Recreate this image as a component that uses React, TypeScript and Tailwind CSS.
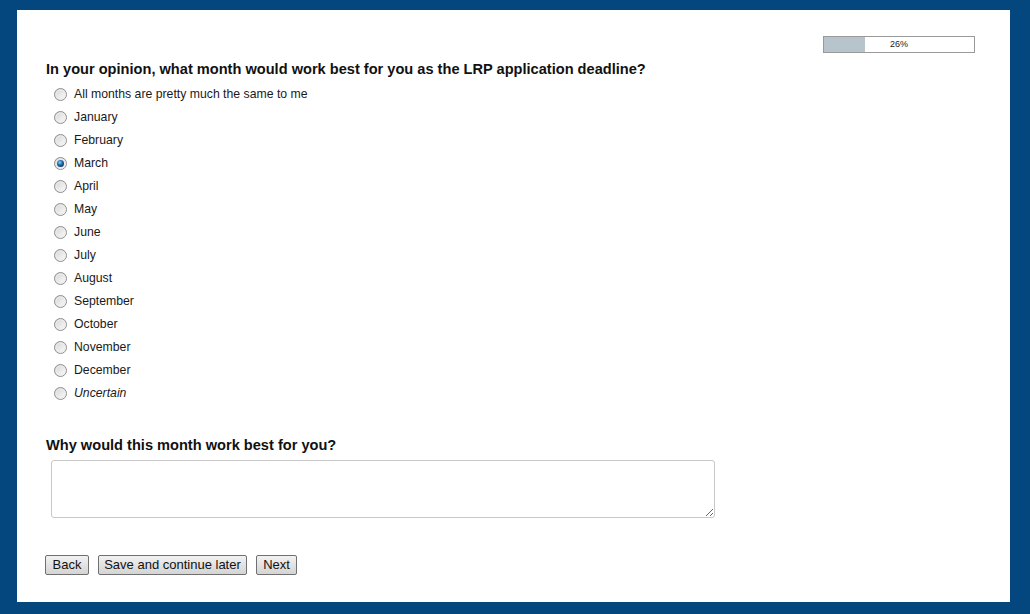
import React from "react";

const options = [
  "All months are pretty much the same to me",
  "January",
  "February",
  "March",
  "April",
  "May",
  "June",
  "July",
  "August",
  "September",
  "October",
  "November",
  "December",
  "Uncertain",
];

function Radio({ checked }: { checked: boolean }) {
  return (
    <svg width="13" height="13" viewBox="0 0 13 13" className="shrink-0">
      <defs>
        <linearGradient id="rg" x1="0" y1="0" x2="1" y2="1">
          <stop offset="0" stopColor="#d2d2d2" />
          <stop offset="1" stopColor="#ffffff" />
        </linearGradient>
        <radialGradient id="dot" cx="0.4" cy="0.35" r="0.7">
          <stop offset="0" stopColor="#8fd0f5" />
          <stop offset="0.5" stopColor="#1f6fb0" />
          <stop offset="1" stopColor="#0a2f5a" />
        </radialGradient>
      </defs>
      <circle cx="6.5" cy="6.5" r="6" fill="url(#rg)" stroke="#8e8e8e" strokeWidth="1" />
      <circle cx="6.5" cy="6.5" r="4.5" fill="none" stroke="#ececec" strokeWidth="1" />
      {checked && <circle cx="6.5" cy="6.5" r="3.5" fill="url(#dot)" />}
    </svg>
  );
}

const buttons: { label: string; w: string }[] = [
  { label: "Back", w: "w-[44px]" },
  { label: "Save and continue later", w: "w-[149px]" },
  { label: "Next", w: "w-[41px]" },
];

export default function App() {
  return (
    <div
      className="w-[1030px] h-[614px] bg-[#03477e] pt-[10px] pl-[17px]"
      style={{ fontFamily: '"Liberation Sans", Arial, sans-serif' }}
    >
      <div className="w-[993px] h-[592px] bg-white flex flex-col pl-[29px] pr-[35px] text-black">
        <div className="flex justify-end pt-[26px]">
          <div className="relative w-[152px] h-[17px] border border-[#999999] bg-white">
            <div className="h-full w-[41px] bg-[#b8c4cc]" />
            <div className="absolute inset-0 flex items-center justify-center text-[9px] text-[#222]">
              26%
            </div>
          </div>
        </div>
        <h2 className="mt-[7px] text-[14.6px] font-bold leading-[18px] text-[#111]">
          In your opinion, what month would work best for you as the LRP application deadline?
        </h2>
        <div className="flex flex-col mt-[5px] pl-[8px]">
          {options.map((o, i) => (
            <div key={o} className="flex items-center h-[23px] gap-[7px]">
              <Radio checked={o === "March"} />
              <span
                className={
                  "text-[12.25px] text-[#1a1a1a] " + (i === options.length - 1 ? "italic" : "")
                }
              >
                {o}
              </span>
            </div>
          ))}
        </div>
        <h2 className="mt-[31px] text-[14.6px] font-bold leading-[18px] text-[#111]">
          Why would this month work best for you?
        </h2>
        <textarea className="mt-[6px] ml-[5px] w-[664px] h-[58px] border border-[#c8c8c8] rounded-[3px] resize-y bg-white" />
        <div className="flex gap-[9px] mt-[37px] ml-[-1px]">
          {buttons.map((b) => (
            <button
              key={b.label}
              className={
                b.w +
                " h-[20px] text-[13px] leading-[16px] text-[#111] border border-[#707070] rounded-[2px] bg-gradient-to-b from-[#f2f2f2] to-[#d4d4d4]"
              }
            >
              {b.label}
            </button>
          ))}
        </div>
      </div>
    </div>
  );
}
